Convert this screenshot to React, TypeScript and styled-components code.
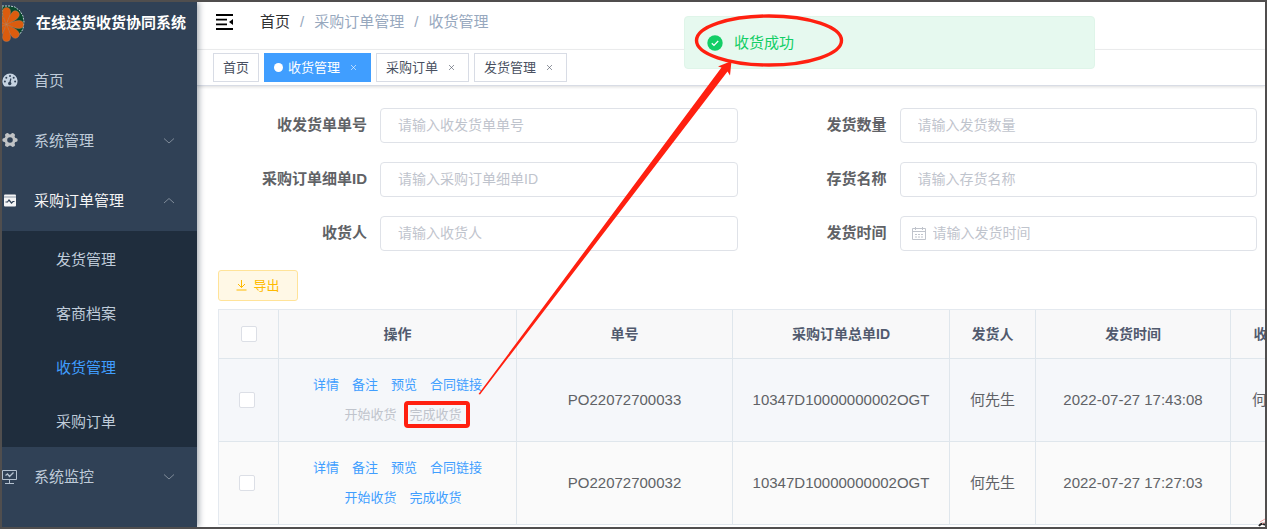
import React from "react";
import styled, { createGlobalStyle, css } from "styled-components";

const GlobalStyle = createGlobalStyle`
  *, *::before, *::after { box-sizing: border-box; }
  body {
    margin: 0;
    color: #606266;
    font-family: "Liberation Sans", "Noto Sans CJK SC", sans-serif;
    font-size: 15px;
    line-height: 20px;
  }
  a { color: inherit; text-decoration: none; }
  button { font-family: inherit; cursor: pointer; }
`;

const Page = styled.div`
  position: relative;
  display: flex;
  min-height: 100vh;
  border: 2px solid #504e4e;
  background: #fff;
  overflow: hidden;
`;

/* ---------- sidebar ---------- */

const Sidebar = styled.aside`
  position: relative;
  flex: 0 0 195px;
  background: #304156;
  box-shadow: 2px 0 6px rgba(0, 21, 41, 0.35);
`;

const Brand = styled.a`
  display: flex;
  align-items: center;
  gap: 11px;
  height: 49px;
  padding-bottom: 8px;
  color: #fff;
  font-weight: 700;
  white-space: nowrap;
`;

const MenuItem = styled.a<{ $open?: boolean }>`
  display: flex;
  align-items: center;
  gap: 16px;
  height: 60px;
  padding-right: 22px;
  color: ${(p) => (p.$open ? "#f4f4f5" : "#bfcbd9")};
`;

const MenuLabel = styled.span`
  flex: 1;
`;

const SubMenu = styled.div`
  background: #1f2d3d;
`;

const SubItem = styled.a<{ $active?: boolean }>`
  display: flex;
  align-items: center;
  height: 54px;
  padding: 3px 0 0 54px;
  color: ${(p) => (p.$active ? "#409eff" : "#bfcbd9")};
`;

/* ---------- header ---------- */

const Main = styled.main`
  flex: 1;
  min-width: 0;
`;

const Navbar = styled.header`
  display: flex;
  align-items: center;
  gap: 27px;
  height: 48px;
  padding: 0 19px 7px;
  border-bottom: 1px solid #f0f1f2;
`;

const IconButton = styled.button`
  display: flex;
  padding: 0;
  border: 0;
  background: none;
  color: #000;
`;

const Crumbs = styled.nav`
  display: flex;
  gap: 10px;
  color: #97a8be;
`;

const CrumbHome = styled.a`
  color: #303133;
`;

const TagBar = styled.nav`
  display: flex;
  gap: 5px;
  padding: 3px 16px;
  border-bottom: 1px solid #d8dce5;
  box-shadow: 0 1px 3px rgba(0, 0, 0, 0.14);
`;

const Tag = styled.div<{ $active?: boolean }>`
  display: flex;
  align-items: center;
  height: 29px;
  padding: 0 9px;
  gap: 5px;
  border: 1px solid ${(p) => (p.$active ? "#409eff" : "#d8dce5")};
  background: ${(p) => (p.$active ? "#409eff" : "#fff")};
  color: ${(p) => (p.$active ? "#fff" : "#495060")};
  font-size: 13px;
`;

const Dot = styled.i`
  width: 9px;
  height: 9px;
  border-radius: 50%;
  background: #fff;
`;

const CloseButton = styled.button`
  display: flex;
  align-items: center;
  justify-content: center;
  width: 16px;
  height: 16px;
  padding: 0;
  border: 0;
  background: none;
  color: inherit;
`;

/* ---------- search form ---------- */

const Content = styled.div`
  padding: 22px 0 0 21px;
`;

const SearchForm = styled.form`
  display: grid;
  grid-template-columns: 1fr 1fr;
  row-gap: 19px;
  padding: 0 8px 19px 0;
`;

const Field = styled.div`
  display: flex;
  align-items: center;
  gap: 13px;
`;

const FieldLabel = styled.label`
  flex: 0 0 149px;
  padding-bottom: 2px;
  text-align: right;
  font-weight: 700;
`;

const InputBox = styled.div`
  display: flex;
  align-items: center;
  gap: 7px;
  flex: 1;
  min-width: 0;
  height: 35px;
  padding-left: 17px;
  border: 1px solid #dfe2e8;
  border-radius: 4px;

  &.with-icon { padding-left: 11px; }
`;

const TextInput = styled.input`
  flex: 1;
  min-width: 0;
  height: 33px;
  padding: 0 0 2px;
  border: 0;
  outline: 0;
  background: none;
  color: #606266;
  font: inherit;
  font-size: 14px;
  &::placeholder { color: #bfc4cd; opacity: 1; }
`;

const ExportButton = styled.button`
  display: flex;
  align-items: center;
  justify-content: center;
  gap: 6px;
  width: 80px;
  height: 31px;
  margin-bottom: 8px;
  padding: 0 0 2px;
  border: 1px solid #ffe399;
  border-radius: 3px;
  background: #fff8e6;
  color: #ffba00;
  font-size: 13px;
`;

/* ---------- table ---------- */

const TableArea = styled.div`
  overflow: hidden;
  background: #f7f8f9;
`;

const DataTable = styled.table`
  width: 1100px;
  table-layout: fixed;
  border-collapse: separate;
  border-spacing: 0;
  border: solid #e4e9ef;
  border-width: 1px 0 0 1px;
  text-align: center;
`;

const cell = css`
  padding: 0;
  border: solid #dfe6ec;
  border-width: 0 1px 1px 0;
`;

const HeadCell = styled.th`
  ${cell}
  height: 49px;
  background: #f8f8f9;
  color: #515a6e;
  font-size: 14px;
`;

const Row = styled.tr<{ $hover?: boolean }>`
  background: ${(p) => (p.$hover ? "#f5f7fa" : "#fafafa")};
`;

const Cell = styled.td`
  ${cell}
  height: 83px;
  padding-bottom: 1px;
`;

const CheckCell = styled(Cell)`
  padding-right: 4px;
`;

const Check = styled.input`
  appearance: none;
  display: block;
  width: 16px;
  height: 16px;
  margin: 0 auto;
  border: 1px solid #dcdfe6;
  border-radius: 2px;
  background: #fff;
`;

const Actions = styled.div<{ $indent?: boolean }>`
  display: flex;
  justify-content: center;
  gap: 13px;
  padding-left: ${(p) => (p.$indent ? "11px" : "0")};
`;

const Action = styled.button`
  padding: 0;
  border: 0;
  background: none;
  color: #409eff;
  font-size: 13px;
  line-height: 30px;
  &:disabled { color: #c0c4cc; }
`;

/* ---------- overlays ---------- */

const Toast = styled.div`
  position: absolute;
  top: 14px;
  left: 682px;
  display: flex;
  align-items: center;
  gap: 11px;
  width: 411px;
  height: 53px;
  padding-left: 22px;
  border: 1px solid #dff5e9;
  border-radius: 4px;
  background: #e6f9ef;
  color: #13ce66;
`;

const Markup = styled.svg`
  position: absolute;
  top: 0;
  left: 0;
  pointer-events: none;
`;

/* ---------- icons ---------- */

const Logo = () => (
  <svg width="23" height="38" viewBox="0 0 23 38" aria-hidden="true">
    <path
      d="M0 2h8l5 1 5 4 3 5 1 6-1 7-3 5-5 2-13 0z"
      fill="#0a4a2e"
      stroke="#b9cbd0"
      strokeWidth="1"
      strokeDasharray="2 1"
    />
    <path d="M0 26l12 3 2 8H0z" fill="#304156" />
    {[-90, -45, -135, 0, 42, 90, 138, 180].map((a) => (
      <path
        key={a}
        d="M4.500 20.500C2.500 16 .3 11 .5 7.500.7 4.500 2.500 3.500 4.500 3.500s3.800 1 4 4C8.700 11 6.500 16 4.500 20.500z"
        fill="#dc5c0e"
        stroke="#b98a6c"
        strokeWidth="0.400"
        transform={`rotate(${a} 4.500 20.500)`}
      />
    ))}
  </svg>
);

const HomeIcon = () => (
  <svg width="16" height="16" viewBox="0 0 16 16" aria-hidden="true">
    <path d="M8 .5A7.600 7.600 0 0 0 .4 8.100c0 2 .7 3.700 1.800 5 .2.300.5.400.8.400h10c.3 0 .6-.1.800-.4a7.600 7.600 0 0 0 1.800-5A7.600 7.600 0 0 0 8 .5z" fill="#c6d3e1" />
    <g fill="#304156">
      <circle cx="2.900" cy="8.500" r="1" />
      <circle cx="4.300" cy="4.800" r="1" />
      <circle cx="8" cy="3.100" r="1" />
      <circle cx="11.700" cy="4.800" r="1" />
      <circle cx="13.100" cy="8.500" r="1" />
      <circle cx="7.700" cy="10.500" r="1.700" />
    </g>
    <path d="M7.700 10.500l1.200-5" stroke="#304156" strokeWidth="1.200" />
  </svg>
);

const GearIcon = () => (
  <svg width="16" height="16" viewBox="0 0 16 16" aria-hidden="true">
    <g stroke="#c1c3c5" strokeWidth="4.200" strokeLinecap="round">
      <path d="M2.400 7h11.200M5.200 2.200l5.600 9.600M10.800 2.200L5.200 11.800" />
    </g>
    <circle cx="8" cy="7" r="5.700" fill="#c1c3c5" />
    <circle cx="8" cy="7" r="2.800" fill="#304156" />
  </svg>
);

const OrderIcon = () => (
  <svg width="16" height="16" viewBox="0 0 16 16" aria-hidden="true">
    <rect x="2" y="1.500" width="12" height="12" rx="1" fill="#f4f4f5" />
    <path d="M2 4h12" stroke="#8a95a3" />
    <path d="M3.500 9h2l1.500-2 2.500 3 1.500-1.500h1.500" fill="none" stroke="#304156" strokeWidth="1.200" />
  </svg>
);

const MonitorIcon = () => (
  <svg width="16" height="16" viewBox="0 0 16 16" fill="none" stroke="#b4c1cf" aria-hidden="true">
    <path d="M.5 1.500h14v9H.5zM7.500 10.500v4M3 14.500h9" />
    <path d="M3.500 6.500l2-1.500 2 2.500 4-4" strokeWidth="1.300" />
  </svg>
);

const Chevron = ({ up }: { up?: boolean }) => (
  <svg width="12" height="8" viewBox="0 0 12 8" fill="none" stroke="#7f8b99" aria-hidden="true">
    <path d={up ? "M1 6l5-4.500L11 6" : "M1 1.500L6 6l5-4.500"} />
  </svg>
);

const FoldIcon = () => (
  <svg width="17" height="16" viewBox="0 0 17 16" aria-hidden="true">
    <path d="M0 1h17M0 5.700h11M0 10.300h11M0 15h17" stroke="currentColor" strokeWidth="1.800" />
    <path d="M17 5v6l-4-3z" fill="currentColor" />
  </svg>
);

const CloseIcon = () => (
  <svg width="5" height="5" viewBox="0 0 5 5" stroke="currentColor" strokeWidth="0.600" aria-hidden="true">
    <path d="M0 0l5 5M5 0L0 5" />
  </svg>
);

const CalendarIcon = () => (
  <svg width="14" height="14" viewBox="0 0 14 14" fill="none" stroke="#c0c4cc" aria-hidden="true">
    <path d="M.5 1.500h13v11H.5zM.5 4.500h13M3.500 0v3M10.500 0v3" />
    <path d="M3 7.500h8M3 10h8" strokeDasharray="2 1" />
  </svg>
);

const DownloadIcon = () => (
  <svg width="11" height="12" viewBox="0 0 11 12" fill="none" stroke="currentColor" aria-hidden="true">
    <path d="M5.500 1v7.500M2 5l3.500 3.500L9 5M.5 11h10" />
  </svg>
);

const SuccessIcon = () => (
  <svg width="16" height="16" viewBox="0 0 16 16" aria-hidden="true">
    <circle cx="8" cy="8" r="7.700" fill="#13ce66" />
    <path d="M4.800 8.200l2.200 2.200 4.200-4.400" fill="none" stroke="#fff" strokeWidth="1.300" />
  </svg>
);

/* ---------- data ---------- */

const submenu = ["发货管理", "客商档案", "收货管理", "采购订单"];

const tags = [
  { name: "首页" },
  { name: "收货管理", active: true, closable: true },
  { name: "采购订单", closable: true },
  { name: "发货管理", closable: true },
];

const fields = [
  { id: "receipt", label: "收发货单单号" },
  { id: "quantity", label: "发货数量" },
  { id: "detail", label: "采购订单细单ID" },
  { id: "stock", label: "存货名称" },
  { id: "receiver", label: "收货人" },
  { id: "date", label: "发货时间", date: true },
];

const columns = ["操作", "单号", "采购订单总单ID", "发货人", "发货时间", "收货人"];
const widths = [60, 238, 216, 217, 86, 195, 88];

const rows = [
  { no: "PO22072700033", order: "10347D10000000002OGT", sender: "何先生", time: "2022-07-27 17:43:08", receiver: "何先生", done: true },
  { no: "PO22072700032", order: "10347D10000000002OGT", sender: "何先生", time: "2022-07-27 17:27:03", receiver: "", done: false },
];

export default function App() {
  return (
    <>
      <GlobalStyle />
      <Page>
        <Sidebar>
          <Brand href="#">
            <Logo />
            在线送货收货协同系统
          </Brand>
          <nav>
            <MenuItem href="#"><HomeIcon /><MenuLabel>首页</MenuLabel></MenuItem>
            <MenuItem href="#"><GearIcon /><MenuLabel>系统管理</MenuLabel><Chevron /></MenuItem>
            <MenuItem href="#" $open><OrderIcon /><MenuLabel>采购订单管理</MenuLabel><Chevron up /></MenuItem>
            <SubMenu>
              {submenu.map((name) => (
                <SubItem key={name} href="#" $active={name === "收货管理"}>{name}</SubItem>
              ))}
            </SubMenu>
            <MenuItem href="#"><MonitorIcon /><MenuLabel>系统监控</MenuLabel><Chevron /></MenuItem>
          </nav>
        </Sidebar>

        <Main>
          <Navbar>
            <IconButton aria-label="收起菜单"><FoldIcon /></IconButton>
            <Crumbs>
              <CrumbHome href="#">首页</CrumbHome>
              <span>/</span>
              <span>采购订单管理</span>
              <span>/</span>
              <span>收货管理</span>
            </Crumbs>
          </Navbar>
          <TagBar>
            {tags.map((t) => (
              <Tag key={t.name} $active={t.active}>
                {t.active && <Dot />}
                <a href="#">{t.name}</a>
                {t.closable && <CloseButton aria-label="关闭"><CloseIcon /></CloseButton>}
              </Tag>
            ))}
          </TagBar>

          <Content>
            <SearchForm>
              {fields.map((f) => (
                <Field key={f.id}>
                  <FieldLabel htmlFor={f.id}>{f.label}</FieldLabel>
                  <InputBox className={f.date ? "with-icon" : undefined}>
                    {f.date && <CalendarIcon />}
                    <TextInput id={f.id} placeholder={`请输入${f.label}`} />
                  </InputBox>
                </Field>
              ))}
            </SearchForm>
            <ExportButton><DownloadIcon />导出</ExportButton>
            <TableArea>
              <DataTable>
                <colgroup>
                  {widths.map((w, i) => <col key={i} width={w} />)}
                </colgroup>
                <thead>
                  <tr>
                    <HeadCell><Check type="checkbox" aria-label="全选" /></HeadCell>
                    {columns.map((c) => <HeadCell key={c}>{c}</HeadCell>)}
                  </tr>
                </thead>
                <tbody>
                  {rows.map((r) => (
                    <Row key={r.no} $hover={r.done}>
                      <CheckCell><Check type="checkbox" aria-label={r.no} /></CheckCell>
                      <Cell>
                        <Actions>
                          <Action>详情</Action>
                          <Action>备注</Action>
                          <Action>预览</Action>
                          <Action>合同链接</Action>
                        </Actions>
                        <Actions $indent>
                          <Action disabled={r.done}>开始收货</Action>
                          <Action disabled={r.done}>完成收货</Action>
                        </Actions>
                      </Cell>
                      <Cell>{r.no}</Cell>
                      <Cell>{r.order}</Cell>
                      <Cell>{r.sender}</Cell>
                      <Cell>{r.time}</Cell>
                      <Cell>{r.receiver}</Cell>
                    </Row>
                  ))}
                </tbody>
              </DataTable>
            </TableArea>
          </Content>
        </Main>

        <Toast role="status"><SuccessIcon />收货成功</Toast>

        <Markup width="1263" height="525" viewBox="2 2 1263 525" aria-hidden="true">
          <ellipse cx="769" cy="40.500" rx="72.500" ry="24.500" fill="none" stroke="#ff2010" strokeWidth="3.400" />
          <path d="M478.500 394L721.500 67.500 718 66.500 731.500 61 730 75.500 727.500 71.500 480 394.500z" fill="#ff2010" />
          <rect x="406" y="403" width="62" height="23" rx="2" fill="none" stroke="#ff2010" strokeWidth="4" />
          <path d="M1259 526q3-4 6-1" fill="none" stroke="#222" strokeWidth="2" />
          <path d="M1260 522l5-3M1262 524l3-2" stroke="#f3a6a6" />
        </Markup>
      </Page>
    </>
  );
}
